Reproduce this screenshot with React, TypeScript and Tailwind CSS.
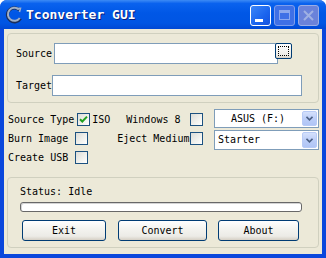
import React from "react";

const font = "font-['DejaVu_Sans_Mono','Liberation_Mono',monospace]";

function Check({ checked = false, className = "" }: { checked?: boolean; className?: string }) {
  return (
    <div
      className={`w-[13px] h-[13px] shrink-0 border border-[#1C5180] bg-[linear-gradient(135deg,#DCDCD7_0%,#F2F2EE_60%,#FFFFFF_100%)] flex items-center justify-center ${className}`}
    >
      {checked && (
        <svg width="9" height="9" viewBox="0 0 9 9">
          <path d="M1 4.2 L3.3 6.5 L8 1.6" stroke="#21A121" strokeWidth="2" fill="none" />
        </svg>
      )}
    </div>
  );
}

function Select({ text, center = false, className = "" }: { text: string; center?: boolean; className?: string }) {
  return (
    <div className={`w-[105px] flex border border-[#7F9DB9] bg-white p-[1px] ${className}`}>
      <div className={`flex-1 flex items-center text-black leading-none ${center ? "justify-center pr-[2px]" : "pl-[2px]"}`}>
        {text}
      </div>
      <div className="w-[15px] rounded-[2px] border border-[#B8CBF6] bg-[linear-gradient(to_bottom,#D5E1FC_0%,#BCCEF8_50%,#B0C5F5_100%)] flex items-center justify-center">
        <svg width="7" height="5" viewBox="0 0 7 5">
          <path d="M0.5 0.8 L3.5 3.8 L6.5 0.8" stroke="#4D6185" strokeWidth="1.6" fill="none" />
        </svg>
      </div>
    </div>
  );
}

function Btn({ label, w }: { label: string; w: string }) {
  return (
    <div
      className={`${w} h-[21px] rounded-[3px] border border-[#003C74] bg-[linear-gradient(to_bottom,#FFFFFF_0%,#F4F4F0_40%,#ECEBE6_80%,#D6D0C5_100%)] flex items-center justify-center text-black`}
    >
      {label}
    </div>
  );
}

export default function App() {
  return (
    <div className={`w-[326px] h-[258px] flex flex-col bg-[#0A47DC] rounded-t-[7px] overflow-hidden ${font}`}>
      {/* Title bar */}
      <div className="h-[29px] shrink-0 flex items-center bg-[linear-gradient(to_bottom,#3D8BF5_0%,#0A62EE_12%,#0057E6_45%,#0055E3_80%,#0048D4_100%)]">
        <div className="ml-[5px] w-[18px] h-[18px] flex items-center justify-center">
          <svg width="18" height="18" viewBox="0 0 18 18">
            <path d="M14.5 4 A7 7 0 1 0 15.5 12.5" stroke="#1B2E5A" strokeWidth="3.2" fill="none" />
            <path d="M13.8 3.5 A6.5 6.5 0 1 0 14.8 12" stroke="#9FB0C8" strokeWidth="2" fill="none" />
            <path d="M11 2.5 L15.5 2.2 L14.5 6" stroke="#9FB0C8" strokeWidth="1.5" fill="none" />
          </svg>
        </div>
        <div className="ml-[3px] text-[13px] font-bold text-white [text-shadow:1px_1px_0_#0A1E7A]">
          Tconverter GUI
        </div>
        <div className="flex-1" />
        <div className="flex gap-[3px] mr-[7px] mt-[1px]">
          <div className="w-[21px] h-[21px] rounded-[3px] border border-white bg-[linear-gradient(135deg,#3C86F7_0%,#1A64EE_60%,#1552DE_100%)] relative">
            <div className="absolute left-[4px] top-[13px] w-[8px] h-[3px] bg-white" />
          </div>
          <div className="w-[21px] h-[21px] rounded-[3px] border border-[#7E9DEB] bg-[#3F70E6] flex items-center justify-center">
            <div className="w-[11px] h-[10px] border border-[#8CA8EE] border-t-[3px]" />
          </div>
          <div className="w-[21px] h-[21px] rounded-[3px] border border-[#9AADE6] bg-[#6A82DA] flex items-center justify-center">
            <svg width="11" height="11" viewBox="0 0 11 11">
              <path d="M1 1 L10 10 M10 1 L1 10" stroke="#9FB0E3" strokeWidth="2" />
            </svg>
          </div>
        </div>
      </div>

      {/* Client */}
      <div className="mx-[4px] mb-[4px] flex-1 bg-[#ECE9D8] flex flex-col text-[10px] text-black">
        {/* Group 1 */}
        <div className="ml-[3px] mt-[4px] w-[312px] h-[70px] shrink-0 rounded-[4px] border border-[#D0D0BF] flex flex-col">
          <div className="mt-[9px] flex items-start">
            <div className="ml-[8px] w-[36px] h-[21px] flex items-center">Source</div>
            <div className="ml-[2px] w-[224px] h-[21px] border border-[#7F9DB9] bg-white" />
            <div className="ml-[-3px] w-[17px] h-[16px] rounded-[2px] border border-[#003C74] bg-[linear-gradient(to_bottom,#FFFFFF_0%,#ECEBE6_80%,#D6D0C5_100%)] p-[2px]">
              <div className="w-full h-full border border-dotted border-black" />
            </div>
          </div>
          <div className="mt-[11px] flex items-center">
            <div className="ml-[8px] w-[36px] h-[21px] flex items-center">Target</div>
            <div className="w-[250px] h-[21px] border border-[#7F9DB9] bg-white" />
          </div>
        </div>

        {/* Options */}
        <div className="h-[74px] shrink-0 flex">
          <div className="w-[206px] pt-[7px] flex flex-col">
            <div className="h-[19px] flex items-center pl-[4px]">
              <span>Source Type</span>
              <Check checked className="ml-[3px]" />
              <span className="ml-[2px]">ISO</span>
              <span className="ml-[16px]">Windows 8</span>
              <Check className="ml-[10px]" />
            </div>
            <div className="h-[19px] flex items-center pl-[4px]">
              <span>Burn Image</span>
              <Check className="ml-[7px]" />
              <span className="ml-[29px]">Eject Medium</span>
              <Check className="ml-[1px]" />
            </div>
            <div className="h-[19px] flex items-center pl-[4px]">
              <span>Create USB</span>
              <Check className="ml-[7px]" />
            </div>
          </div>
          <div className="ml-[4px] pt-[6px] flex flex-col gap-[2px]">
            <Select text="ASUS (F:)" center className="h-[19px]" />
            <Select text="Starter" className="h-[20px]" />
          </div>
        </div>

        {/* Group 2 */}
        <div className="ml-[3px] w-[312px] h-[71px] shrink-0 rounded-[4px] border border-[#D0D0BF] flex flex-col">
          <div className="mt-[7px] ml-[12px] h-[13px] flex items-center">Status: Idle</div>
          <div className="mt-[4px] ml-[12px] w-[282px] h-[10px] rounded-[3px] border border-[#686868] bg-white shadow-[inset_1px_1px_0_#D4D4D4]" />
          <div className="mt-[8px] ml-[14px] flex">
            <Btn label="Exit" w="w-[84px]" />
            <div className="w-[12px]" />
            <Btn label="Convert" w="w-[89px]" />
            <div className="w-[11px]" />
            <Btn label="About" w="w-[81px]" />
          </div>
        </div>
      </div>
    </div>
  );
}
